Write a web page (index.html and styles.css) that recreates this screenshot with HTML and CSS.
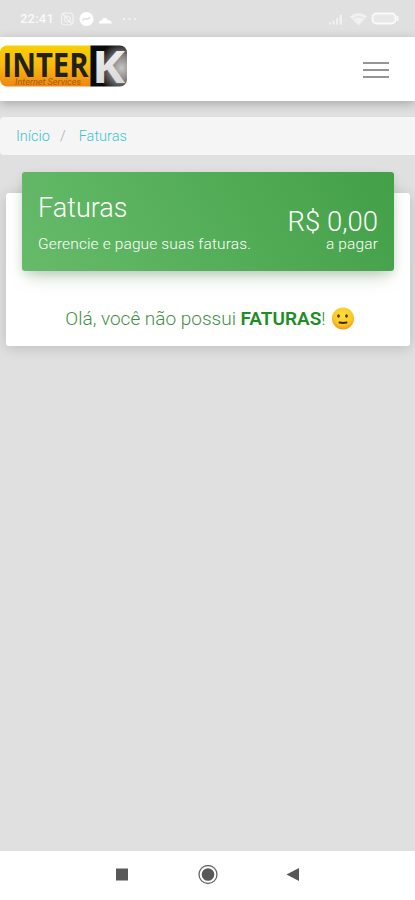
FILE: index.html
```html
<!DOCTYPE html>
<html lang="pt-BR">
<head>
  <meta charset="UTF-8">
  <meta name="viewport" content="width=device-width, initial-scale=1.0">
  <title>Faturas</title>
  <link rel="stylesheet" href="styles.css">
</head>
<body>
  <div class="status-bar">
    <span class="clock">22:41</span>
    <svg class="status-left" width="76" height="16" viewBox="0 0 76 16">
      <g fill="none" stroke="#f3f3f3" stroke-width="1.2">
        <rect x="1.5" y="2" width="11.5" height="12" rx="3.5"/>
        <circle cx="7.2" cy="8" r="3"/>
        <path d="M3 3l9 10"/>
      </g>
      <circle cx="26.5" cy="8" r="7" fill="#fff"/>
      <path d="M22.5 9.5c2-4 4 1 7.5-3" fill="none" stroke="#d8d8d8" stroke-width="1.3"/>
      <path d="M39 12.5c0-3 2-3.500 3-3.300 1-3.400 5-3 5.600-.3 2.400 0 4 1 4.400 3.600z" fill="#fff"/>
      <g fill="#f8f8f8">
        <circle cx="64" cy="8" r="1"/>
        <circle cx="69.5" cy="8" r="1"/>
        <circle cx="75" cy="8" r="1"/>
      </g>
    </svg>
    <svg class="status-right" width="72" height="16" viewBox="0 0 72 16">
      <path d="M1 13.5v-2h2v2zM4.5 13.5v-4h2v4zM8 13.5V7h2v6.5zM11.5 13.500V4H14v9.500z" fill="#f1f1f1"/>
      <path d="M22 5.5c5-4.500 12-4.500 17 0l-8.500 9z" fill="#f1f1f1"/>
      <path d="M25 8c3.500-3 7.500-3 11 0" fill="none" stroke="#ddd"/>
      <rect x="44.5" y="2.5" width="23" height="10" rx="4" fill="#e8e8e8" stroke="#fafafa" stroke-width="1.8"/>
      <path d="M69.5 5v5" stroke="#f8f8f8" stroke-width="2"/>
    </svg>
  </div>

  <nav class="navbar">
    <svg class="logo" width="128" height="42" viewBox="0 0 128 42">
      <defs>
        <linearGradient id="gold" x1="0" y1="0" x2="0" y2="1">
          <stop offset="0" stop-color="#f8d000"/>
          <stop offset=".5" stop-color="#f8b90c"/>
          <stop offset="1" stop-color="#ee8513"/>
        </linearGradient>
        <radialGradient id="steel" cx=".85" cy=".55" r=".65">
          <stop offset="0" stop-color="#c5c5c5"/>
          <stop offset=".45" stop-color="#858585"/>
          <stop offset="1" stop-color="#0a0a0a"/>
        </radialGradient>
        <linearGradient id="letter" x1="0" y1="0" x2="0" y2="1">
          <stop offset="0" stop-color="#f6f6f6"/>
          <stop offset="1" stop-color="#d2d2d2"/>
        </linearGradient>
      </defs>
      <path d="M7 .5h84v41H7a7 7 0 0 1-7-7v-27a7 7 0 0 1 7-7z" fill="url(#gold)"/>
      <path d="M90.5.5H120a7 7 0 0 1 7 7v27a7 7 0 0 1-7 7H90.500z" fill="url(#steel)"/>
      <text class="logo-inter" x="2.5" y="32" textLength="86" lengthAdjust="spacingAndGlyphs">INTER</text>
      <text class="logo-sub" x="15" y="40" textLength="66" lengthAdjust="spacingAndGlyphs">Internet Services</text>
      <text class="logo-k" x="92" y="37.5" textLength="33" lengthAdjust="spacingAndGlyphs" fill="url(#letter)">K</text>
    </svg>
    <button class="toggler" type="button" aria-label="Menu">
      <span></span>
      <span></span>
      <span></span>
    </button>
  </nav>

  <main class="content">
    <div class="breadcrumb">
      <a href="#">Início</a>
      <span class="sep">/</span>
      <a href="#">Faturas</a>
    </div>

    <section class="card">
      <div class="card-header">
        <div>
          <h4 class="title">Faturas</h4>
          <p class="category">Gerencie e pague suas faturas.</p>
        </div>
        <div class="total">
          <div class="amount">R$ 0,00</div>
          <p class="category">a pagar</p>
        </div>
      </div>
      <div class="card-body">
        <span class="message">Olá, você não possui <b>FATURAS</b>!</span>
        <svg class="smile" width="24" height="24" viewBox="0 0 24 24">
          <defs>
            <radialGradient id="face" cx=".5" cy=".35" r=".65">
              <stop offset="0" stop-color="#ffe040"/>
              <stop offset=".65" stop-color="#fcc925"/>
              <stop offset="1" stop-color="#ed9a1c"/>
            </radialGradient>
          </defs>
          <circle cx="12" cy="11.5" r="11" fill="url(#face)"/>
          <ellipse cx="7.500" cy="9" rx="1.4" ry="1.7" fill="#4e3a12"/>
          <ellipse cx="15.5" cy="9" rx="1.4" ry="1.7" fill="#4e3a12"/>
          <path d="M8.5 15.5q3.500.8 7 0" fill="none" stroke="#3d2c10" stroke-width="2" stroke-linecap="round"/>
        </svg>
      </div>
    </section>
  </main>

  <div class="system-nav">
    <svg width="20" height="20" viewBox="0 0 20 20">
      <rect x="4" y="3.5" width="12" height="12" fill="#585858"/>
    </svg>
    <svg width="20" height="20" viewBox="0 0 20 20">
      <circle cx="10" cy="9.5" r="9" fill="none" stroke="#666" stroke-width="1.3"/>
      <circle cx="10" cy="9.5" r="6.3" fill="#585858"/>
    </svg>
    <svg width="20" height="20" viewBox="0 0 20 20">
      <path d="M2.500 9.500L15 3v13z" fill="#585858"/>
    </svg>
  </div>
</body>
</html>
```
FILE: styles.css
```css
* {
  box-sizing: border-box;
}

body {
  margin: 0;
  height: 900px;
  display: flex;
  flex-direction: column;
  overflow: hidden;
  background: #e0e0e0;
  font-family: Roboto, "Liberation Sans", sans-serif;
  font-weight: 300;
}

h4,
p {
  margin: 0;
  font-weight: 300;
}

a {
  color: #3cc4ce;
  text-decoration: none;
}

.status-bar {
  height: 37px;
  display: flex;
  align-items: center;
  padding: 0 15px 0 20px;
}

.clock {
  width: 40px;
  color: #fafafa;
  font-size: 13px;
  font-weight: 500;
  letter-spacing: 0.2px;
}

.status-left {
  overflow: visible;
}

.status-right {
  margin-left: auto;
}

.navbar {
  height: 64px;
  display: flex;
  align-items: center;
  justify-content: space-between;
  padding: 0 26px 6px 0;
  background: #fff;
  box-shadow: 0 3px 10px rgba(0, 0, 0, 0.25);
}

.logo-inter {
  font-family: "Open Sans", sans-serif;
  font-size: 34px;
  font-weight: 700;
  fill: #24201a;
}

.logo-sub {
  font-size: 9px;
  font-style: italic;
  font-weight: 400;
  fill: #a75c10;
}

.logo-k {
  font-family: "Open Sans", sans-serif;
  font-size: 44px;
  font-weight: 700;
}

.toggler {
  display: flex;
  flex-direction: column;
  gap: 5px;
  width: 26px;
  margin-top: 7px;
  padding: 0;
  border: 0;
  background: none;
}

.toggler span {
  height: 2px;
  background: #959595;
}

.content {
  flex: 1;
  padding-top: 16px;
}

.breadcrumb {
  height: 38px;
  display: flex;
  align-items: center;
  padding: 0 16px;
  border-radius: 4px 0 0 4px;
  background: #f5f5f5;
  font-size: 14.5px;
}

.breadcrumb a {
  font-weight: 350;
}

.sep {
  padding: 0 13px 0 10px;
  color: #aaa;
}

.card {
  margin: 38px 5px 0 6px;
  height: 153px;
  padding: 0 16px;
  border-radius: 3px;
  background: #fff;
  box-shadow: 0 2px 14px rgba(0, 0, 0, 0.16);
}

.card-header {
  height: 99px;
  margin-bottom: 35px;
  display: flex;
  justify-content: space-between;
  padding: 19px 16px 0;
  border-radius: 3px;
  background: linear-gradient(60deg, #66bb6a, #43a047);
  box-shadow: 0 10px 18px -6px rgba(60, 120, 60, 0.32), 0 3px 8px rgba(0, 0, 0, 0.1);
  color: #fff;
  transform: translateY(-21px);
}

.title {
  font-size: 27px;
  line-height: 34px;
}

.category {
  font-size: 15.5px;
  line-height: 20px;
  letter-spacing: 0.13px;
}

.title + .category {
  margin-top: 9px;
}

.total {
  padding-top: 15px;
  text-align: right;
}

.amount {
  font-size: 27.5px;
  line-height: 32px;
}

.total .category {
  margin-top: -4px;
}

.card-body {
  display: flex;
  align-items: center;
  justify-content: center;
  gap: 5px;
  margin-top: -20px;
  padding-left: 4px;
  color: #3f8f43;
  font-size: 19px;
  line-height: 24px;
}

.message b {
  color: #208c26;
  font-weight: 600;
}

.system-nav {
  height: 49px;
  display: flex;
  justify-content: center;
  gap: 66px;
  padding-top: 14px;
  background: #fff;
}
```
